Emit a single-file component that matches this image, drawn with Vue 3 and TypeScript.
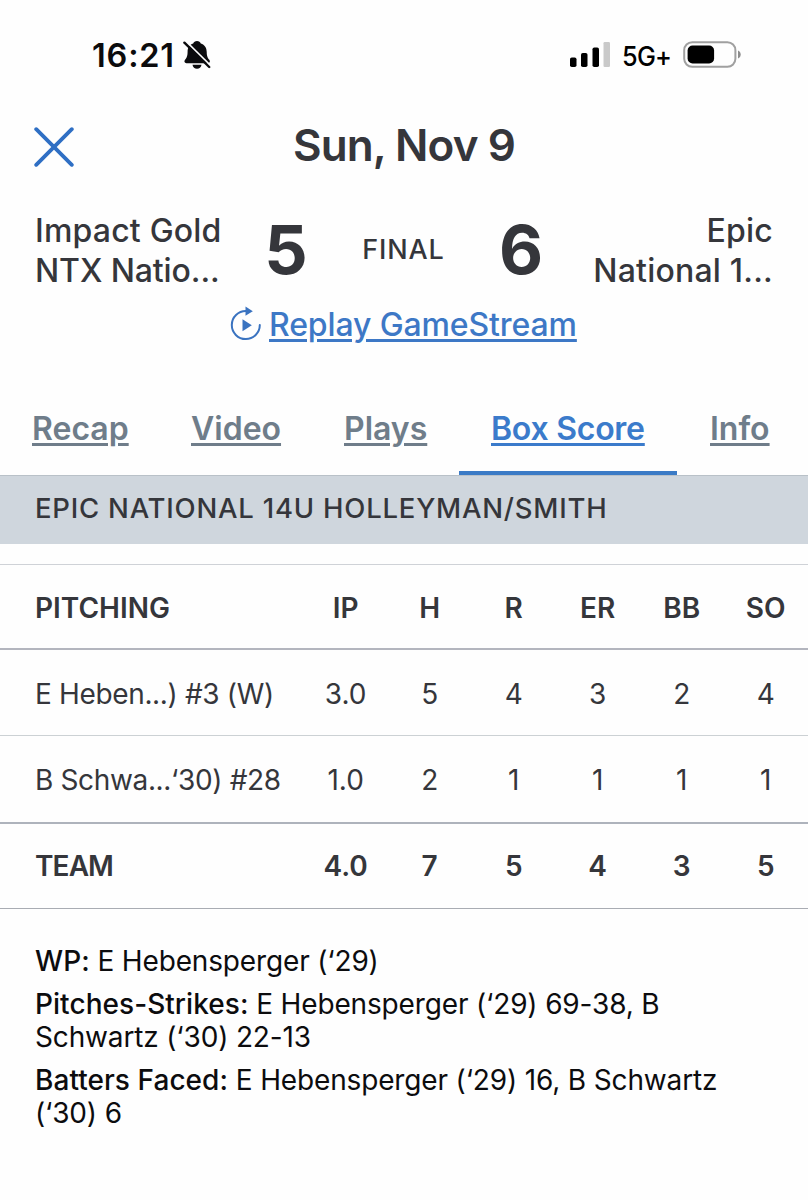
<script setup lang="ts">
interface Tab {
  id: string
  label: string
}
interface Row {
  name: string
  stats: string[]
  kind: 'head' | 'player' | 'last' | 'total'
}
interface Note {
  label: string
  text: string
}

const tabs: Tab[] = [
  { id: 'recap', label: 'Recap' },
  { id: 'video', label: 'Video' },
  { id: 'plays', label: 'Plays' },
  { id: 'box', label: 'Box Score' },
  { id: 'info', label: 'Info' },
]
const activeTab = 'box'

const rows: Row[] = [
  { name: 'PITCHING', stats: ['IP', 'H', 'R', 'ER', 'BB', 'SO'], kind: 'head' },
  { name: 'E Heben...) #3 (W)', stats: ['3.0', '5', '4', '3', '2', '4'], kind: 'player' },
  { name: 'B Schwa...‘30) #28', stats: ['1.0', '2', '1', '1', '1', '1'], kind: 'last' },
  { name: 'TEAM', stats: ['4.0', '7', '5', '4', '3', '5'], kind: 'total' },
]

const notes: Note[] = [
  { label: 'WP:', text: 'E Hebensperger (‘29)' },
  { label: 'Pitches-Strikes:', text: 'E Hebensperger (‘29) 69-38, B Schwartz (‘30) 22-13' },
  { label: 'Batters Faced:', text: 'E Hebensperger (‘29) 16, B Schwartz (‘30) 6' },
]
</script>

<template>
  <main class="screen">
    <div class="status">
      <span class="time">16:21</span>
      <svg class="bell" viewBox="0 0 28 30" width="28" height="30">
        <path d="M14 1c1.900 0 3.300 1 3.800 2.400 4 1.200 5.900 4.600 5.900 8.300 0 4.600 1.100 6.300 2.600 8.100 1.200 1.500.5 3.400-1.400 3.400H3.400c-1.900 0-2.600-1.900-1.400-3.400 1.500-1.800 2.600-3.500 2.600-8.100 0-3.700 1.700-7.100 5.600-8.300C10.700 2 12.100 1 14 1z" fill="#0b0b0d" />
        <path d="M9.500 24.800h9c-.4 2.500-2.100 4-4.500 4s-4.100-1.500-4.500-4z" fill="#0b0b0d" />
        <path d="M2.800 1.200L28 26" stroke="#fff" stroke-width="1.700" />
        <path d="M1.400 2.700L26.200 27" stroke="#0b0b0d" stroke-width="2.400" stroke-linecap="round" />
      </svg>
      <svg class="signal" viewBox="0 0 42 28" width="42" height="28">
        <rect x="1" y="16.500" width="6.500" height="9.500" rx="1.800" fill="#000" />
        <rect x="12" y="12" width="6.500" height="14" rx="1.800" fill="#000" />
        <rect x="23.500" y="6.500" width="6.500" height="19.500" rx="1.800" fill="#000" />
        <rect x="34.500" y="1" width="6.500" height="25" rx="1.200" fill="#c9c9c9" />
      </svg>
      <span class="network">5G+</span>
      <svg class="battery" viewBox="0 0 60 28" width="60" height="28">
        <rect x="1.200" y="1.200" width="51.200" height="24.600" rx="8" fill="none" stroke="#a0a0a0" stroke-width="2" />
        <rect x="4.600" y="4.500" width="26.500" height="18" rx="5" fill="#000" />
        <path d="M55 9.500v8c1.700-.7 2.700-2.200 2.700-4s-1-3.300-2.700-4z" fill="#8c8c8c" />
      </svg>
    </div>

    <header class="title-bar">
      <svg class="close" viewBox="0 0 40 40" width="40" height="40">
        <path d="M2.200 2.200L37.800 37.800M37.800 2.200L2.200 37.800" stroke="#2f6fc4" stroke-width="3.800" stroke-linecap="round" />
      </svg>
      <h1 class="title">Sun, Nov 9</h1>
    </header>

    <section class="score">
      <p class="team">Impact Gold<br /><span class="tight">NTX Natio...</span></p>
      <span class="points">5</span>
      <span class="final">FINAL</span>
      <span class="points">6</span>
      <p class="team away">Epic<br />National 1...</p>
    </section>

    <div class="replay">
      <svg viewBox="0 0 32 36" width="32" height="36">
        <path d="M16 5.100A14 14 0 1 0 29.800 19.100" fill="none" stroke="#3a73c0" stroke-width="2" stroke-linecap="round" />
        <path d="M15.500 0.600L22.800 5.200L15.500 9.800z" fill="#3a73c0" />
        <path d="M12.500 13.200L21.800 19.300L12.500 25.300z" fill="#3a73c0" />
      </svg>
      <a class="replay-link">Replay GameStream</a>
    </div>

    <nav class="tabs">
      <a v-for="tab in tabs" :key="tab.id" class="tab" :class="[tab.id, { active: tab.id === activeTab }]">{{ tab.label }}</a>
    </nav>

    <h2 class="section">EPIC NATIONAL 14U HOLLEYMAN/SMITH</h2>

    <div class="table">
      <div v-for="row in rows" :key="row.name" class="row" :class="row.kind">
        <span class="name">{{ row.name }}</span>
        <span v-for="(stat, i) in row.stats" :key="i" class="stat">{{ stat }}</span>
      </div>
    </div>

    <section class="notes">
      <p v-for="note in notes" :key="note.label"><b>{{ note.label }}</b> {{ note.text }}</p>
    </section>
  </main>
</template>

<style>
body {
  margin: 0;
  background: #fefefe;
}
</style>

<style scoped>
.screen {
  width: 808px;
  height: 1200px;
  overflow: hidden;
  background: #fefefe;
  color: #35363b;
  font-family: Inter, "Liberation Sans", sans-serif;
}
p,
h1,
h2 {
  margin: 0;
}
svg {
  display: block;
  flex: none;
}
.status {
  display: flex;
  align-items: center;
  height: 109px;
  box-sizing: border-box;
  padding-left: 92px;
  color: #0b0b0d;
}
.time {
  width: 91px;
  padding-top: 1px;
  font-size: 32.500px;
  font-weight: 600;
  letter-spacing: 0.8px;
  white-space: nowrap;
}
.signal {
  margin-left: 358px;
}
.network {
  width: 60px;
  margin-left: 11px;
  margin-right: 1px;
  padding-top: 3px;
  font-size: 27.500px;
  font-weight: 500;
  letter-spacing: -0.8px;
  color: #000;
  white-space: nowrap;
  transform: scaleX(0.92);
  transform-origin: left;
}
.title-bar {
  display: grid;
  grid-template-columns: 40px 1fr 40px;
  align-items: center;
  height: 75px;
  padding: 0 34px;
}
.title {
  padding-bottom: 4px;
  font-size: 44px;
  line-height: 70px;
  font-weight: 600;
  letter-spacing: -0.9px;
  text-align: center;
}
.score {
  display: grid;
  grid-template-columns: 206px 90px 145px 90px 1fr;
  align-items: center;
  height: 80px;
  margin-top: 25px;
  padding: 0 35px;
}
.team {
  padding-top: 2px;
  font-size: 32px;
  line-height: 40px;
  font-weight: 500;
  letter-spacing: 0.2px;
  white-space: nowrap;
}
.tight {
  letter-spacing: -0.1px;
}
.away {
  text-align: right;
}
.points {
  padding-bottom: 2px;
  font-size: 68px;
  line-height: 78px;
  font-weight: 700;
  text-align: center;
}
.final {
  padding-bottom: 1px;
  font-size: 27px;
  font-weight: 500;
  letter-spacing: 0.9px;
  text-align: center;
}
.replay {
  display: flex;
  align-items: center;
  height: 40px;
  margin-top: 15px;
  padding-left: 230px;
}
.replay-link {
  margin-left: 7px;
  font-size: 32px;
  font-weight: 500;
  letter-spacing: -0.12px;
  color: #3d78c6;
  text-decoration: underline;
  text-decoration-thickness: 2.500px;
  text-underline-offset: 3px;
  white-space: nowrap;
}
.tabs {
  display: flex;
  height: 91px;
  margin-top: 40px;
}
.tab {
  box-sizing: border-box;
  height: 91px;
  padding: 25px 0 0 32px;
  font-size: 32px;
  line-height: 40px;
  font-weight: 600;
  color: #6f7d8a;
  text-decoration: underline;
  text-decoration-thickness: 2.500px;
  text-underline-offset: 3px;
  white-space: nowrap;
}
.recap {
  width: 159px;
}
.video {
  width: 153px;
}
.plays {
  width: 147px;
}
.box {
  width: 218px;
  margin-right: 1px;
  letter-spacing: -0.25px;
}
.active {
  color: #3b7bcb;
  border-bottom: 4px solid #3b7bc6;
}
.section {
  display: flex;
  align-items: center;
  box-sizing: border-box;
  height: 69px;
  padding: 0 35px 4px;
  border-top: 1px solid #b9c1c8;
  background: #cfd6dd;
  font-size: 27.500px;
  font-weight: 500;
  letter-spacing: 0.78px;
  white-space: nowrap;
}
.table {
  margin-top: 20px;
  border-top: 1px solid #cfd2d7;
}
.row {
  display: grid;
  grid-template-columns: 268.700px repeat(6, 84px);
  align-items: center;
  box-sizing: border-box;
  padding: 2px 0 0 35px;
  font-size: 28px;
  white-space: nowrap;
}
.stat {
  text-align: center;
}
.head {
  height: 85px;
  border-bottom: 2px solid #b3b5be;
  font-weight: 600;
}
.player {
  height: 86px;
  border-bottom: 1px solid #ccd1d4;
}
.last {
  height: 88px;
  border-bottom: 2px solid #aeb3bc;
}
.player .name,
.last .name {
  letter-spacing: -0.35px;
}
.total {
  height: 85px;
  padding-top: 0;
  border-bottom: 1px solid #a9acb3;
  font-weight: 600;
}
.total .name {
  letter-spacing: -0.9px;
}
.notes {
  padding: 36px 35px 0;
  font-size: 28px;
  line-height: 33px;
  letter-spacing: -0.15px;
  color: #0c0c0e;
}
.notes p {
  margin-bottom: 10px;
}
.notes b {
  font-weight: 500;
  letter-spacing: 0.05px;
}
</style>
